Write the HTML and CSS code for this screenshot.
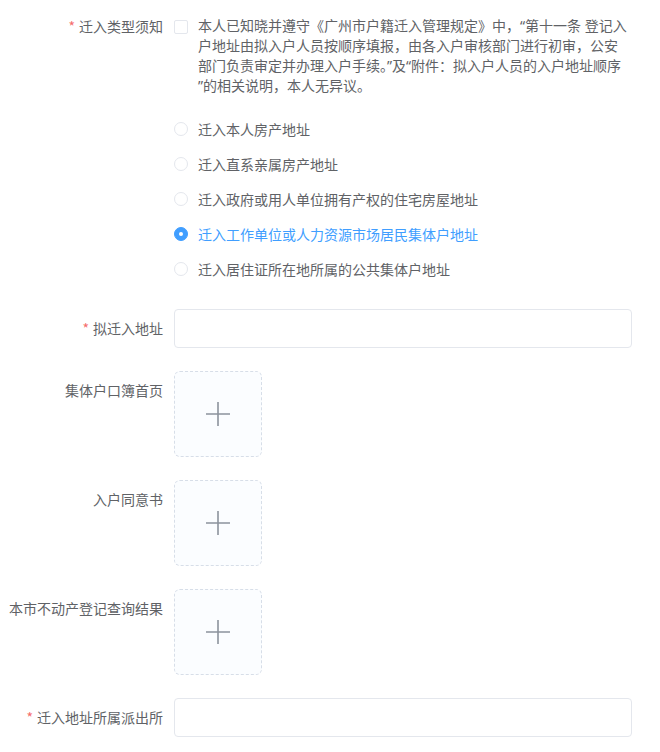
FILE: index.html
```html
<!DOCTYPE html>
<html lang="zh-CN">

<head>
    <meta charset="UTF-8">
    <meta name="viewport" content="width=device-width, initial-scale=1.0">
    <title>迁入登记</title>
    <link rel="stylesheet" href="styles.css">
</head>

<body>
    <form class="form">
        <div class="form-item first">
            <label class="form-label"><span class="required">*</span>迁入类型须知</label>
            <div class="form-content">
                <label class="checkbox">
                    <span class="checkbox-box"></span>
                    <span class="checkbox-text">本人已知晓并遵守《广州市户籍迁入管理规定》中，“第十一条 登记入<br>户地址由拟入户人员按顺序填报，由各入户审核部门进行初审，公安<br>部门负责审定并办理入户手续。”及“附件：拟入户人员的入户地址顺序<br>”的相关说明，本人无异议。</span>
                </label>
                <div class="radio-group">
                    <label class="radio"><span class="radio-dot"></span>迁入本人房产地址</label>
                    <label class="radio"><span class="radio-dot"></span>迁入直系亲属房产地址</label>
                    <label class="radio"><span class="radio-dot"></span>迁入政府或用人单位拥有产权的住宅房屋地址</label>
                    <label class="radio checked"><span class="radio-dot"></span>迁入工作单位或人力资源市场居民集体户地址</label>
                    <label class="radio"><span class="radio-dot"></span>迁入居住证所在地所属的公共集体户地址</label>
                </div>
            </div>
        </div>

        <div class="form-item">
            <label class="form-label"><span class="required">*</span>拟迁入地址</label>
            <div class="form-content">
                <input type="text" class="input">
            </div>
        </div>

        <div class="form-item">
            <label class="form-label">集体户口簿首页</label>
            <div class="form-content">
                <div class="upload">
                    <svg width="26" height="26" viewBox="0 0 26 26"><path d="M13 1v24M1 13h24" stroke="#8c939d" stroke-width="1.6" fill="none"/></svg>
                </div>
            </div>
        </div>

        <div class="form-item">
            <label class="form-label">入户同意书</label>
            <div class="form-content">
                <div class="upload">
                    <svg width="26" height="26" viewBox="0 0 26 26"><path d="M13 1v24M1 13h24" stroke="#8c939d" stroke-width="1.6" fill="none"/></svg>
                </div>
            </div>
        </div>

        <div class="form-item">
            <label class="form-label">本市不动产登记查询结果</label>
            <div class="form-content">
                <div class="upload">
                    <svg width="26" height="26" viewBox="0 0 26 26"><path d="M13 1v24M1 13h24" stroke="#8c939d" stroke-width="1.6" fill="none"/></svg>
                </div>
            </div>
        </div>

        <div class="form-item">
            <label class="form-label"><span class="required">*</span>迁入地址所属派出所</label>
            <div class="form-content">
                <input type="text" class="input">
            </div>
        </div>
    </form>
</body>

</html>
```

FILE: styles.css
```css
* {
    margin: 0;
    padding: 0;
    box-sizing: border-box;
}

body {
    font-family: "Noto Sans CJK SC", "Noto Sans", sans-serif;
    font-size: 14px;
    color: #606266;
    background: #fff;
}

.form {
    width: 632px;
    padding-top: 16px;
}

.form-item {
    display: flex;
    margin-bottom: 23px;
}

.form-label {
    width: 174px;
    flex-shrink: 0;
    padding-right: 11px;
    text-align: right;
    line-height: 38px;
    color: #606266;
}

.first .form-label {
    line-height: 20px;
}

.required {
    color: #f56c6c;
    margin-right: 4px;
}

.form-content {
    flex: 1;
}

/* checkbox */
.checkbox {
    display: flex;
    align-items: flex-start;
}

.checkbox-box {
    width: 14px;
    height: 14px;
    margin-top: 4px;
    margin-right: 10px;
    border: 1px solid #e4e7ed;
    border-radius: 2px;
    flex-shrink: 0;
}

.checkbox-text {
    font-family: "Noto Sans", "Noto Sans CJK SC", sans-serif;
    line-height: 20px;
    white-space: nowrap;
}

/* radios */
.radio-group {
    margin-top: 15px;
}

.radio {
    display: flex;
    align-items: center;
    height: 35px;
}

.radio-dot {
    width: 14px;
    height: 14px;
    border: 1px solid #e4e7ed;
    border-radius: 50%;
    margin-right: 10px;
    position: relative;
}

.radio.checked {
    color: #409eff;
}

.radio.checked .radio-dot {
    background: #409eff;
    border-color: #409eff;
}

.radio.checked .radio-dot::after {
    content: "";
    position: absolute;
    width: 4px;
    height: 4px;
    border-radius: 50%;
    background: #fff;
    top: 4px;
    left: 4px;
}

/* inputs */
.input {
    display: block;
    width: 100%;
    height: 39px;
    border: 1px solid #e4e7ed;
    border-radius: 4px;
    outline: none;
    padding: 0 15px;
    font-size: 14px;
    color: #606266;
}

/* upload */
.upload {
    width: 88px;
    height: 86px;
    border: 1px dashed #d7dee8;
    border-radius: 6px;
    background: #fbfdff;
    display: flex;
    align-items: center;
    justify-content: center;
}
```
